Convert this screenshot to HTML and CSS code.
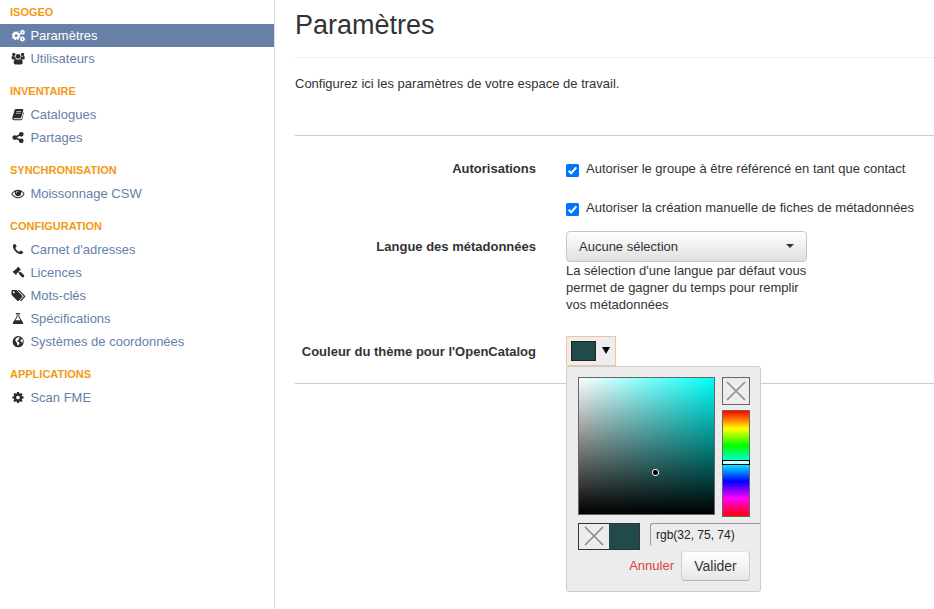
FILE: index.html
```html
<!DOCTYPE html>
<html lang="fr">
<head>
<meta charset="utf-8">
<title>Paramètres</title>
<link rel="stylesheet" href="styles.css">
</head>
<body>
<div class="app">
  <nav class="sidebar">
    <h2 class="nav-title">Isogeo</h2>
    <a class="nav-link active"><svg class="icon" viewBox="0 0 16 14"><g fill="none" stroke="currentColor"><circle cx="6" cy="7.200" r="2.700" stroke-width="2.300"/><circle cx="6" cy="7.200" r="4.200" stroke-width="1.300" stroke-dasharray="1.700 1.600"/><circle cx="12.800" cy="3.500" r="1.600" stroke-width="1.600"/><circle cx="12.800" cy="3.500" r="2.500" stroke-width=".7" stroke-dasharray="1.310 1.310"/><circle cx="12.800" cy="10.800" r="1.600" stroke-width="1.600"/><circle cx="12.800" cy="10.800" r="2.500" stroke-width=".7" stroke-dasharray="1.310 1.310"/></g></svg>Paramètres</a>
    <a class="nav-link"><svg class="icon" viewBox="0 0 16 14"><g fill="currentColor"><circle cx="3.500" cy="2.600" r="1.800"/><circle cx="12.900" cy="2.600" r="1.800"/><circle cx="8.200" cy="4.800" r="2.600"/><path d="M1.200 5.200Q1.200 4.300 2 4.300Q3.600 5.200 5 4.500Q4.900 6.300 6 7.200Q4.800 7.200 4 8.100H2.700Q1.200 8.100 1.200 6.800zM15.200 5.200Q15.200 4.300 14.400 4.300Q12.800 5.200 11.400 4.500Q11.500 6.300 10.400 7.200Q11.600 7.200 12.400 8.100H13.700Q15.200 8.100 15.200 6.800zM5.700 7.600Q8.200 9.300 10.700 7.600Q13 7.900 13 11.600Q13 13.500 11.200 13.500H5.200Q3.400 13.500 3.400 11.600Q3.400 7.900 5.700 7.600z"/></g></svg>Utilisateurs</a>

    <h2 class="nav-title">Inventaire</h2>
    <a class="nav-link"><svg class="icon" viewBox="0 0 16 14"><path fill="currentColor" fill-rule="evenodd" d="M5.800 1.200H12.800Q14 1.300 13.600 2.600L11.600 10Q11.300 11 10.300 11H3.600Q2.800 11 3 11.500Q3.100 12 3.900 12H11Q11.800 12 12.100 11.200L14 4.300Q14.500 4.700 14.300 5.400L12.500 12Q12.100 13.100 11 13.100H3.800Q2.200 13.100 1.900 11.500Q1.700 10.700 2 9.900L4.200 2.600Q4.700 1.200 5.800 1.200z"/><path d="M6.300 3.700H11.600M5.700 5.700H11" stroke="#aaa" stroke-width="1.200"/></svg>Catalogues</a>
    <a class="nav-link"><svg class="icon" viewBox="0 0 1792 1792"><path fill="currentColor" d="M1344 1024q133 0 226.500 93.500t93.500 226.500-93.500 226.500-226.500 93.500-226.500-93.500-93.500-226.500q0-12 2-34l-360-180q-92 86-218 86-133 0-226.500-93.500t-93.500-226.500 93.500-226.500 226.500-93.500q126 0 218 86l360-180q-2-22-2-34 0-133 93.500-226.500t226.500-93.500 226.500 93.500 93.500 226.500-93.500 226.500-226.500 93.500q-126 0-218-86l-360 180q2 22 2 34t-2 34l360 180q92-86 218-86z"/></svg>Partages</a>

    <h2 class="nav-title">Synchronisation</h2>
    <a class="nav-link"><svg class="icon" viewBox="0 0 1792 1792"><path fill="currentColor" d="M1664 960q-152-236-381-353 61 104 61 225 0 185-131.500 316.500t-316.500 131.500-316.500-131.500-131.500-316.500q0-121 61-225-229 117-381 353 133 205 333.500 326.500t434.500 121.500 434.500-121.500 333.500-326.500zm-720-384q0-20-14-34t-34-14q-125 0-214.500 89.500t-89.500 214.500q0 20 14 34t34 14 34-14 14-34q0-86 61-147t147-61q20 0 34-14t14-34zm848 384q0 34-20 69-140 230-376.500 368.500t-499.500 138.500-499.500-139-376.500-368q-20-35-20-69t20-69q140-229 376.500-368t499.500-139 499.500 139 376.500 368q20 35 20 69z"/></svg>Moissonnage CSW</a>

    <h2 class="nav-title">Configuration</h2>
    <a class="nav-link"><svg class="icon" viewBox="0 0 1792 1792"><path fill="currentColor" d="M1600 1240q0 27-10 70.500t-21 68.500q-21 50-122 106-94 51-186 51-27 0-53-3.500t-57-12.500-47-14.500-55.500-20.500-49.500-18q-98-35-175-83-127-79-264-216t-216-264q-48-77-83-175-3-9-18-49.500t-20.500-55.500-14.500-47-12.500-57-3.500-53q0-92 51-186 56-101 106-122 25-11 68.500-21t70.500-10q14 0 21 3 18 6 53 76 11 19 30 54t35 63.500 31 53.500q3 4 17.500 25t21.500 35.500 7 28.500q0 20-28.500 50t-62 55-62 53-28.500 46q0 9 5 22.500t8.500 20.500 14 24 11.500 19q76 137 174 235t235 174q2 1 19 11.500t24 14 20.500 8.500 22.500 5q18 0 46-28.500t53-62 55-62 50-28.500q14 0 28.500 7t35.500 21.500 25 17.500q25 15 53.500 31t63.500 35 54 30q70 35 76 53 3 7 3 21z"/></svg>Carnet d'adresses</a>
    <a class="nav-link"><svg class="icon" viewBox="0 0 16 14"><path fill="currentColor" d="M7.400 1Q7.900 .6 8.400 1L10.900 3.500Q11.300 4 10.900 4.500Q10.400 4.800 10 4.500L8.700 5.800L9.800 6.900L10.300 6.500Q10.800 6.300 11.300 6.700L14.300 9.700Q15.300 10.900 14.300 11.900Q13.300 12.900 12.100 11.900L9.300 9Q8.800 8.400 9.200 7.800L8.100 6.800L6.400 8.300Q6.900 8.900 6.500 9.300Q6 9.700 5.500 9.300L2.700 6.600Q2.200 6 2.600 5.600Q3 5.200 3.500 5.500L7.400 2Q7 1.500 7.400 1z"/></svg>Licences</a>
    <a class="nav-link"><svg class="icon" viewBox="0 0 2048 1792"><path fill="currentColor" d="M576 448q0-53-37.500-90.500t-90.500-37.500-90.500 37.500-37.500 90.500 37.500 90.500 90.500 37.500 90.500-37.500 37.500-90.500zm1067 576q0 53-37 90l-491 492q-39 37-91 37-53 0-90-37l-715-716q-38-37-64.500-101t-26.500-117v-416q0-52 38-90t90-38h416q53 0 117 26.500t102 64.500l715 714q37 39 37 91zm384 0q0 53-37 90l-491 492q-39 37-91 37-36 0-59-14t-53-45l470-470q37-37 37-90 0-52-37-91l-715-714q-38-38-102-64.500t-117-26.500h224q53 0 117 26.500t102 64.500l715 714q37 39 37 91z"/></svg>Mots-clés</a>
    <a class="nav-link"><svg class="icon" viewBox="0 0 1792 1792"><path fill="currentColor" d="M1591 1448q56 89 21.500 152.500t-140.500 63.500h-1152q-106 0-140.500-63.500t21.500-152.500l503-793v-399h-64q-26 0-45-19t-19-45 19-45 45-19h512q26 0 45 19t19 45-19 45-45 19h-64v399zm-779-725l-272 429h712l-272-429-20-31v-436h-128v436z"/></svg>Spécifications</a>
    <a class="nav-link"><svg class="icon" viewBox="0 0 16 14"><circle cx="8.200" cy="7.200" r="6" fill="currentColor"/><path fill="#fff" d="M8.200 2.500L10 2.300L9.600 3.500L8.600 4.300L9.200 5.100L7.700 6L7.200 6.900L8.500 7.500L9.800 8.500L9 10.100L8 11.600L7.300 10.400L6.900 8.500L5.600 6.900L5 5.200L6 3.400zM11.500 4.600L12.800 4.600L13.200 6L13 7.900L12.300 8.800L11.800 7.300L10.700 6.800L10.800 5.600z"/></svg>Systèmes de coordonnées</a>

    <h2 class="nav-title">Applications</h2>
    <a class="nav-link"><svg class="icon" viewBox="0 0 1792 1792"><path fill="currentColor" d="M1152 896q0-106-75-181t-181-75-181 75-75 181 75 181 181 75 181-75 75-181zm512-109v222q0 12-8 23t-20 13l-185 28q-19 54-39 91 35 50 107 138 10 12 10 25t-9 23q-27 37-99 108t-94 71q-12 0-26-9l-138-108q-44 23-91 38-16 136-29 186-7 28-36 28h-222q-14 0-24.500-8.500t-11.500-21.500l-28-184q-49-16-90-37l-141 107q-10 9-25 9-14 0-25-11-126-114-165-168-7-10-7-23 0-12 8-23 15-21 51-66.500t54-70.500q-27-50-41-99l-183-27q-13-2-21-12.500t-8-23.500v-222q0-12 8-23t19-13l186-28q14-46 39-92-40-57-107-138-10-12-10-24 0-10 9-23 26-36 98.500-107.500t94.500-71.500q13 0 26 10l138 107q44-23 91-38 16-136 29-186 7-28 36-28h222q14 0 24.500 8.500t11.500 21.500l28 184q49 16 90 37l142-107q9-9 24-9 13 0 25 10 129 119 165 170 7 8 7 22 0 12-8 23-15 21-51 66.500t-54 70.500q26 50 41 98l183 28q13 2 21 12.500t8 23.500z"/></svg>Scan FME</a>
  </nav>

  <main class="content">
    <h1 class="page-title">Paramètres</h1>
    <p class="intro">Configurez ici les paramètres de votre espace de travail.</p>
    <form class="settings">
      <div class="row row-auth">
        <span class="label">Autorisations</span>
        <div class="checks">
          <label class="check"><svg class="box" viewBox="0 0 13 13"><rect width="13" height="13" rx="1.500" fill="#0075ff"/><path d="M2.700 6.800L5.200 9.300L10.300 3.300" fill="none" stroke="#fff" stroke-width="2"/></svg>Autoriser le groupe à être référencé en tant que contact</label>
          <label class="check"><svg class="box" viewBox="0 0 13 13"><rect width="13" height="13" rx="1.500" fill="#0075ff"/><path d="M2.700 6.800L5.200 9.300L10.300 3.300" fill="none" stroke="#fff" stroke-width="2"/></svg>Autoriser la création manuelle de fiches de métadonnées</label>
        </div>
      </div>
      <div class="row row-lang">
        <span class="label">Langue des métadonnées</span>
        <div class="field">
          <div class="select">Aucune sélection<span class="caret"></span></div>
          <p class="help">La sélection d'une langue par défaut vous permet de gagner du temps pour remplir vos métadonnées</p>
        </div>
      </div>
      <div class="row row-color">
        <span class="label">Couleur du thème pour l'OpenCatalog</span>
        <div class="picker">
          <div class="swatch-button"><span class="swatch"></span><svg class="arrow" viewBox="0 0 8 7"><path d="M0 0H8L4 7z"/></svg></div>
          <div class="popup">
            <div class="pick-top">
              <div class="shade"><span class="knob"></span></div>
              <div class="pick-side">
                <div class="clear"><svg class="cross" viewBox="0 0 20 20"><path class="halo" d="M1 1L19 19M19 1L1 19"/><path d="M1 1L19 19M19 1L1 19"/></svg></div>
                <div class="hue"><span class="hue-mark"></span></div>
              </div>
            </div>
            <div class="pick-values">
              <div class="compare"><span class="before"><svg class="cross" viewBox="0 0 20 20"><path class="halo" d="M1 1L19 19M19 1L1 19"/><path d="M1 1L19 19M19 1L1 19"/></svg></span><span class="after"></span></div>
              <div class="value">rgb(32, 75, 74)</div>
            </div>
            <div class="pick-actions"><a class="cancel">Annuler</a><span class="submit">Valider</span></div>
          </div>
        </div>
      </div>
    </form>
  </main>
</div>
</body>
</html>
```
FILE: styles.css
```css
* { box-sizing: border-box; }

body {
  margin: 0;
  overflow: hidden;
  background: #fff;
  color: #333;
  font: 13px/17px "Liberation Sans", Arial, sans-serif;
}

h1, h2, p { margin: 0; }

.app { display: flex; height: 609px; }

/* Sidebar */
.sidebar {
  flex: none;
  width: 275px;
  padding-top: 1px;
  border-right: 1px solid #ddd;
}

.nav-title {
  height: 23px;
  margin-top: 10px;
  padding-left: 10px;
  color: #f39911;
  font-size: 11px;
  font-weight: bold;
  line-height: 23px;
  text-transform: uppercase;
}

.nav-title:first-child { margin-top: 0; }

.nav-link {
  display: flex;
  align-items: center;
  height: 23px;
  padding-left: 10px;
  color: #6680a8;
}

.icon {
  flex: none;
  width: 16px;
  height: 13px;
  margin: 0 4.400px 1px 0;
  color: #2b2b2b;
}

.nav-link.active { background: #6680a8; color: #fff; }
.nav-link.active .icon { color: #fff; }

/* Content */
.content { flex: 1; min-width: 0; padding-left: 20px; }

.page-title {
  height: 58px;
  padding-top: 5px;
  border-bottom: 1px solid #eee;
  font-size: 27px;
  font-weight: normal;
  line-height: 40px;
}

.intro { height: 77px; padding-top: 17px; white-space: nowrap; }

.settings {
  height: 249px;
  border-top: 1px solid #ccccd4;
  border-bottom: 1px solid #ccccd4;
}

.row { display: flex; gap: 30px; }
.row-auth { padding-top: 24px; height: 95px; }
.row-lang { height: 105px; }

.label {
  flex: none;
  width: 241px;
  font-weight: bold;
  text-align: right;
  white-space: nowrap;
}

.row-lang .label { padding-top: 7px; }
.row-color .label { padding-top: 7px; }

.checks { display: flex; flex-direction: column; gap: 22px; }

.check { display: flex; gap: 7px; white-space: nowrap; }
.box { flex: none; width: 13px; height: 13px; margin-top: 4px; }

.field { width: 241px; }

.select {
  display: flex;
  align-items: center;
  justify-content: space-between;
  height: 31px;
  padding: 0 12px;
  border: 1px solid #c4c4c4;
  border-radius: 4px;
  background: linear-gradient(#fff, #e0e0e0);
}

.caret {
  margin-top: -1px;
  border: 4px solid transparent;
  border-top-color: #333;
  border-bottom: 0;
}

/* Colour picker */
.picker { position: relative; }

.swatch-button {
  display: flex;
  align-items: center;
  gap: 6px;
  width: 50px;
  height: 30px;
  padding-left: 4px;
  border: 1px solid #f0c49b;
  background: #eee;
}

.swatch {
  width: 25px;
  height: 20px;
  border: 1px solid #222;
  background: #204b4a;
}

.arrow { width: 8px; height: 7px; margin-top: -2px; }

.popup {
  position: absolute;
  top: 30px;
  left: 0;
  width: 195px;
  height: 226px;
  padding: 10px 0 0 11px;
  overflow: hidden;
  border: 1px solid #ccc;
  border-radius: 3px;
  background: #ececec;
}

.pick-top { display: flex; gap: 7px; }

.shade {
  position: relative;
  width: 137px;
  height: 138px;
  border: 1px solid #666;
  background: linear-gradient(to top, #000, transparent), linear-gradient(to right, #fff, #00fffa);
}

.knob {
  position: absolute;
  top: 91px;
  left: 73px;
  width: 7px;
  height: 7px;
  border: 1px solid #fff;
  border-radius: 3px;
  background: #000;
}

.clear {
  display: grid;
  place-items: center;
  width: 28px;
  height: 28px;
  margin-bottom: 5px;
  border: 1px solid #666;
}

.cross { width: 20px; height: 20px; fill: none; stroke: #999; stroke-width: 2; }
.cross .halo { stroke: #fff; stroke-width: 3.600; }

.hue {
  position: relative;
  width: 28px;
  height: 107px;
  border: 1px solid #666;
  background: linear-gradient(#f00 0%, #ff0 17%, #0f0 33%, #0ff 50%, #00f 67%, #f0f 83%, #f00 100%);
}

.hue-mark {
  position: absolute;
  top: 49px;
  left: -1px;
  width: 28px;
  height: 5px;
  border: 1px solid #000;
  background: #ccfffe;
}

.pick-values { display: flex; gap: 10px; margin-top: 6px; padding-top: 2px; }
.pick-top { margin-bottom: -1px; }
.pick-values { margin-top: 7px; }

.compare {
  display: flex;
  flex: none;
  width: 62px;
  height: 27px;
  margin-top: 0;
  border: 1px solid #333;
}

.before { display: grid; place-items: center; width: 30px; padding-bottom: 2px; }
.after { flex: 1; background: #204b4a; }

.value {
  flex: 1;
  height: 23px;
  padding-left: 5px;
  border-top: 1px solid #999;
  border-left: 1px solid #999;
  border-radius: 3px 0 0 3px;
  color: #222;
  font-size: 12px;
  line-height: 22px;
  white-space: nowrap;
}

.pick-values { margin-top: 5px; }

.pick-actions {
  display: flex;
  align-items: center;
  justify-content: flex-end;
  gap: 7px;
  margin: 1px 10px 0 0;
}

.cancel { padding-bottom: 2px; color: #d93f3f; }

.submit {
  width: 69px;
  height: 30px;
  border: 1px solid #ccc;
  border-top-color: #e2e2e2;
  border-bottom-color: #b3b3b3;
  border-radius: 4px;
  background: linear-gradient(#fff, #e6e6e6);
  font-size: 14px;
  line-height: 28px;
  text-align: center;
}
```
